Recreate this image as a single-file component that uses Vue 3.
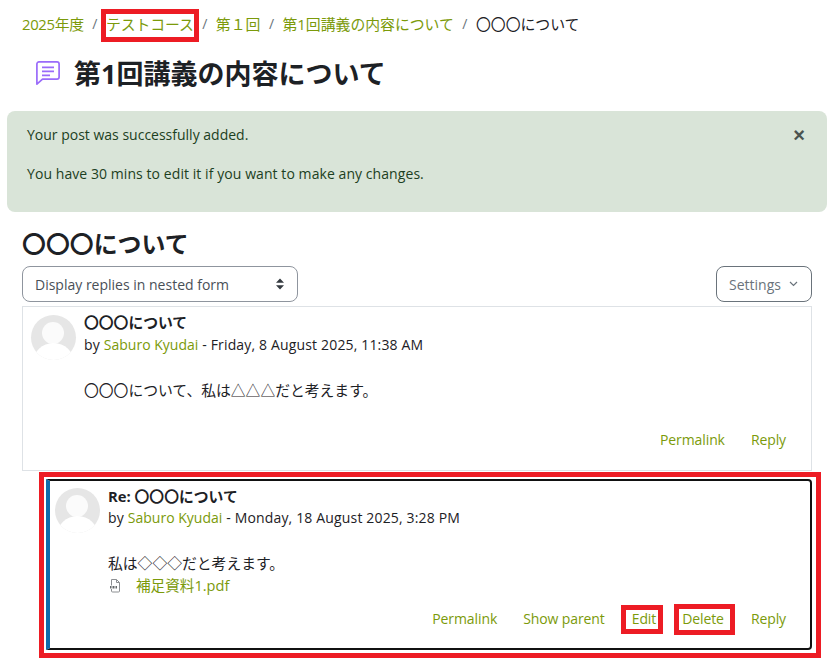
<script setup>
const crumbs = ['2025年度', 'テストコース', '第１回', '第1回講義の内容について'];
</script>

<template>
  <div class="page">
    <nav class="crumbs">
      <template v-for="(c, i) in crumbs" :key="c">
        <a :class="{ marked: i === 1, year: i === 0 }">{{ c }}</a>
        <span class="sep">/</span>
      </template>
      <span class="current">〇〇〇について</span>
    </nav>

    <header class="head">
      <svg class="forum" width="24" height="24" viewBox="0 0 24 24" fill="none" stroke="#9a6bfa" stroke-width="1.700" stroke-linejoin="round" stroke-linecap="round">
        <path d="M3 .9h18A2.100 2.100 0 0 1 23.100 3v13A2.100 2.100 0 0 1 21 18.100H6.500L.9 23.100V3A2.100 2.100 0 0 1 3 .9z" />
        <path d="M6 6.300h12M6 10.300h12M6 14.300h8" stroke-width="1.800" stroke-linecap="butt" />
      </svg>
      <h1>第1回講義の内容について</h1>
    </header>

    <section class="alert">
      <button class="close">×</button>
      <p>Your post was successfully added.</p>
      <p class="second">You have 30 mins to edit it if you want to make any changes.</p>
    </section>

    <h2>〇〇〇について</h2>

    <div class="controls">
      <div class="select">
        <span>Display replies in nested form</span>
        <svg width="10" height="14" viewBox="0 0 10 14"><path d="M5 1.500 9 5.800H1zM5 12.500 1 8.200h8z" fill="#343a40" /></svg>
      </div>
      <div class="settings">
        <span>Settings</span>
        <svg width="9" height="6" viewBox="0 0 9 6" fill="none" stroke="#6a737b" stroke-width="1.200"><path d="M1 1l3.500 3.500L8 1" /></svg>
      </div>
    </div>

    <article class="post first">
      <div class="avatar"><i class="a-head"></i><i class="a-body"></i></div>
      <div class="main">
        <h3>〇〇〇について</h3>
        <div class="by">by <a>Saburo Kyudai</a> - Friday, 8 August 2025, 11:38 AM</div>
        <p class="body">〇〇〇について、私は△△△だと考えます。</p>
        <div class="actions">
          <a>Permalink</a>
          <a>Reply</a>
        </div>
      </div>
    </article>

    <div class="reply-frame">
      <article class="post reply">
        <div class="avatar"><i class="a-head"></i><i class="a-body"></i></div>
        <div class="main">
          <h3>Re: 〇〇〇について</h3>
          <div class="by">by <a>Saburo Kyudai</a> - Monday, 18 August 2025, 3:28 PM</div>
          <p class="body">私は◇◇◇だと考えます。</p>
          <div class="file">
            <svg width="12" height="15" viewBox="0 0 12 15" fill="none" stroke="#8c8f92" stroke-width="1">
              <path d="M2.500 1.500h5l3 3v8.500a1 1 0 0 1-1 1h-6a1 1 0 0 1-1-1z" />
              <path d="M7.500 1.500v3h3" />
              <rect x="0.500" y="7.500" width="9" height="3.500" fill="#fff" stroke="none" />
              <path d="M1.500 8v2.500M3 8v2.500M4.500 8v2.500M6 8v2.500M7.500 8v2.500" stroke="#55595c" stroke-width="0.900" />
            </svg>
            <a>補足資料1.pdf</a>
          </div>
          <div class="actions">
            <a>Permalink</a>
            <a class="parent">Show parent</a>
            <a class="boxed edit">Edit</a>
            <a class="boxed del">Delete</a>
            <a>Reply</a>
          </div>
        </div>
      </article>
    </div>
  </div>
</template>

<style>
html, body { margin: 0; background: #fff; }
</style>

<style scoped>
.page {
  width: 833px;
  height: 666px;
  overflow: hidden;
  position: relative;
  box-sizing: border-box;
  font-family: "Open Sans", "Noto Sans CJK JP", sans-serif;
  font-size: 14px;
  line-height: 22px;
  color: #1d2125;
  background: #fff;
}
a { color: #7b9a0a; text-decoration: none; }
.crumbs {
  display: flex;
  align-items: center;
  height: 28px;
  padding: 10px 0 0 22px;
  font-size: 14.850px;
}
.year { letter-spacing: -0.300px; }
.sep { margin: 0 8.500px; color: #6a737b; font-size: 14px; }
.marked { position: relative; letter-spacing: -0.100px; }
.marked::after {
  content: "";
  position: absolute;
  left: -5px; right: -5px; top: -4px; bottom: -7px;
  border: 5px solid #ed1c24;
}
.head {
  display: flex;
  align-items: center;
  height: 40px;
  margin-top: 16px;
  padding-left: 36px;
  gap: 14px;
}
.forum { margin-bottom: 2px; }
h1 { margin: 0; font-size: 27px; font-weight: 700; line-height: 40px; }
.alert {
  position: relative;
  box-sizing: border-box;
  height: 101px;
  margin: 17px 6px 0 7px;
  padding: 13px 20px;
  background: #d9e4d8;
  border-radius: 8px;
  color: #1c3f22;
}
.alert p { margin: 0 0 16.500px; }
.alert .second { letter-spacing: 0.07px; }
.close {
  position: absolute;
  right: 22px; top: 13px;
  border: 0; padding: 0;
  background: none;
  font: 700 20px/22px "Liberation Sans", sans-serif;
  color: #4a5350;
}
h2 {
  margin: 17px 0 0 22px;
  font-size: 23.900px;
  line-height: 30px;
  font-weight: 700;
}
.controls {
  display: flex;
  justify-content: space-between;
  margin: 7px 21px 4px 22px;
}
.select, .settings {
  box-sizing: border-box;
  height: 36px;
  display: flex;
  align-items: center;
  border: 1px solid #8f959e;
  border-radius: 8px;
  color: #495057;
}
.select span, .settings span { position: relative; top: 1px; }
.select { width: 276px; justify-content: space-between; padding: 0 12px; }
.settings { width: 96px; padding: 0 12px; gap: 8px; border-color: #6a737b; color: #6a737b; }
.post { display: flex; box-sizing: border-box; }
.first {
  margin: 0 21px 0 22px;
  height: 165px;
  padding: 6px 8px 0 8px;
  border: 1px solid #dee2e6;
}
.avatar {
  position: relative;
  flex: none;
  width: 45px;
  height: 45px;
  margin: 2px 8px 0 0;
  border-radius: 50%;
  background: #e6e6e6;
  overflow: hidden;
}
.reply .avatar { margin-top: 1px; }
.a-head {
  position: absolute;
  left: 11px; top: 7px;
  width: 22px; height: 22px;
  border-radius: 50%;
  background: #fbfbfb;
}
.a-body {
  position: absolute;
  left: 2px; top: 28px;
  width: 41px; height: 40px;
  border-radius: 50%;
  background: #fff;
}
.main { flex: 1; min-width: 0; }
h3 { margin: 0; font-size: 14.800px; line-height: 19px; font-weight: 700; }
.by { margin-top: 2px; letter-spacing: 0.16px; }
.by a { letter-spacing: 0.02px; }
.body { margin: 23px 0 0; font-size: 14.800px; }
.actions {
  display: flex;
  justify-content: flex-end;
  gap: 26px;
  margin-top: 28px;
  padding-right: 17px;
  letter-spacing: -0.1px;
}
.reply-frame {
  box-sizing: border-box;
  margin: 1px 12px 0 39px;
  height: 186px;
  padding: 2px 4px 3px 2px;
  border: 5px solid #ed1c24;
}
.reply {
  height: 100%;
  padding: 6px 9px 0 5px;
  border: 2px solid #111;
  border-left: 4px solid #0f6cab;
  border-radius: 0 4px 4px 0;
}
.reply .by { margin-top: 1px; }
.file { display: flex; align-items: center; gap: 14px; margin-left: 1px; font-size: 14.600px; }
.file svg { margin-right: 1px; }
.reply .actions { margin-top: 12px; padding-right: 15px; }
.parent { margin-right: 1px; }
.boxed { position: relative; }
.boxed::after {
  content: "";
  position: absolute;
  border: 5px solid #ed1c24;
}
.edit::after { left: -11px; right: -7px; top: -3px; bottom: -4px; }
.del { margin-right: 1px; }
.del::after { left: -8px; right: -11px; top: -4px; bottom: -5px; }
</style>
